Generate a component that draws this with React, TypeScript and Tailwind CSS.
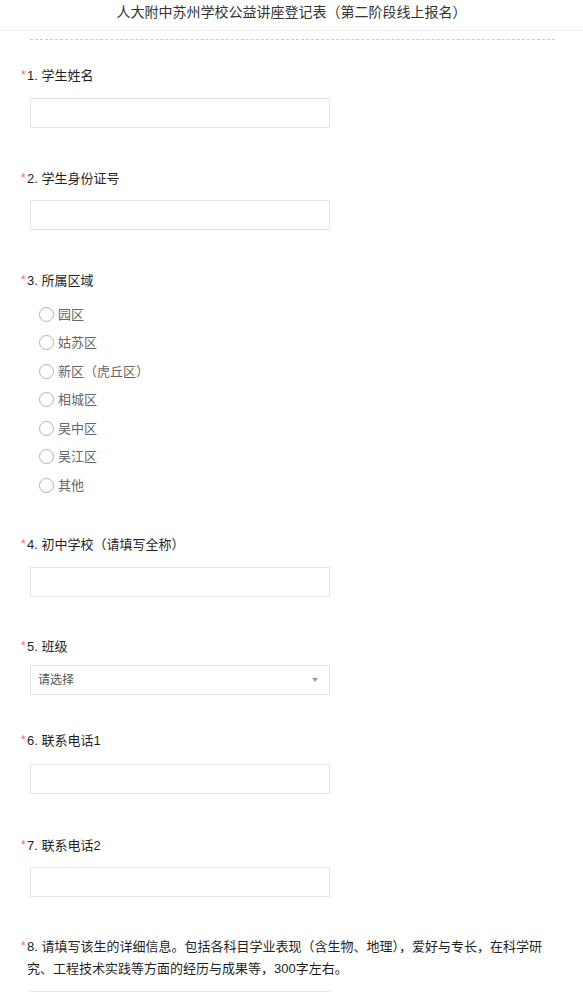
import React from "react";

const FONT = { fontFamily: '"Liberation Sans", Arial, "Noto Sans CJK SC", sans-serif' };

function Label({ n, text, className = "" }: { n: string; text: string; className?: string }) {
  return (
    <div className={"relative -ml-[3px] text-[13px] leading-[22px] text-[#1f1f1f] " + className}>
      <span className="absolute -left-[6px] top-[-1px] text-[12px] text-[#f5675f]">*</span>
      {n}. {text}
    </div>
  );
}

function Field({ className = "" }: { className?: string }) {
  return <div className={"h-[30px] w-[300px] border border-[#e3e3e3] bg-white " + className} />;
}

const regions = ["园区", "姑苏区", "新区（虎丘区）", "相城区", "吴中区", "吴江区", "其他"];

export default function App() {
  return (
    <div className="min-h-[992px] w-[583px] overflow-hidden bg-white" style={FONT}>
      <div className="h-[31px] border-b border-[#eeeeee] pt-[2px] text-center text-[14px] leading-[20px] text-[#333]">
        人大附中苏州学校公益讲座登记表（第二阶段线上报名）
      </div>
      <div className="px-[30px]">
        <div className="mt-[8px] w-[525px] border-t border-dashed border-[#cccccc]" />

        <Label n="1" text="学生姓名" className="mt-[25px]" />
        <Field className="mt-[11px]" />

        <Label n="2" text="学生身份证号" className="mt-[40px]" />
        <Field className="mt-[10px]" />

        <Label n="3" text="所属区域" className="mt-[40px]" />
        <div className="mt-[8px] flex flex-col pl-[9px]">
          {regions.map((r) => (
            <div key={r} className="flex h-[28.5px] items-center">
              <span className="h-[15px] w-[15px] rounded-full border border-[#b4b4b4] bg-white" />
              <span className="ml-[4px] text-[13px] text-[#666]">{r}</span>
            </div>
          ))}
        </div>

        <Label n="4" text="初中学校（请填写全称）" className="mt-[34px]" />
        <Field className="mt-[11px]" />

        <Label n="5" text="班级" className="mt-[39px]" />
        <div className="mt-[7px] flex h-[30px] w-[300px] items-center justify-between border border-[#e3e3e3] pl-[7px] pr-[11px]">
          <span className="text-[12px] text-[#555]">请选择</span>
          <span className="h-0 w-0 border-l-[3.5px] border-r-[3.5px] border-t-[4px] border-l-transparent border-r-transparent border-t-[#999]" />
        </div>

        <Label n="6" text="联系电话1" className="mt-[35px]" />
        <Field className="mt-[12px]" />

        <Label n="7" text="联系电话2" className="mt-[41px]" />
        <Field className="mt-[10px]" />

        <Label
          n="8"
          text="请填写该生的详细信息。包括各科目学业表现（含生物、地理），爱好与专长，在科学研究、工程技术实践等方面的经历与成果等，300字左右。"
          className="mt-[39px] w-[528px]"
        />
        <Field className="mt-[11px] h-[60px]" />
      </div>
    </div>
  );
}
